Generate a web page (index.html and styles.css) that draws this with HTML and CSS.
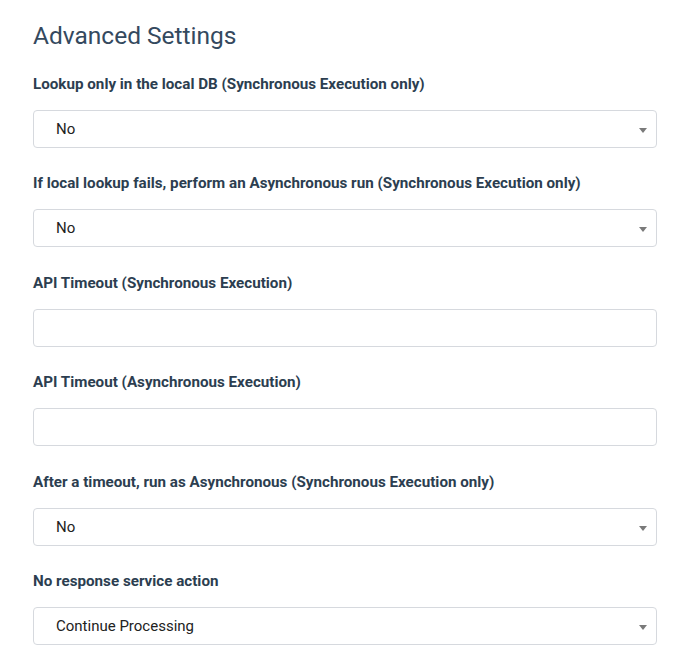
FILE: index.html
```html
<!DOCTYPE html>
<html>
<head>
<meta charset="utf-8">
<link rel="stylesheet" href="styles.css">
</head>
<body>
<div class="panel">
  <h2 class="title">Advanced Settings</h2>
  <div class="field">
    <div class="label">Lookup only in the local DB (Synchronous Execution only)</div>
    <div class="control select"><span class="value">No</span><span class="caret"></span></div>
  </div>
  <div class="field">
    <div class="label">If local lookup fails, perform an Asynchronous run (Synchronous Execution only)</div>
    <div class="control select"><span class="value">No</span><span class="caret"></span></div>
  </div>
  <div class="field">
    <div class="label">API Timeout (Synchronous Execution)</div>
    <div class="control"></div>
  </div>
  <div class="field">
    <div class="label">API Timeout (Asynchronous Execution)</div>
    <div class="control"></div>
  </div>
  <div class="field">
    <div class="label">After a timeout, run as Asynchronous (Synchronous Execution only)</div>
    <div class="control select"><span class="value">No</span><span class="caret"></span></div>
  </div>
  <div class="field">
    <div class="label">No response service action</div>
    <div class="control select"><span class="value">Continue Processing</span><span class="caret"></span></div>
  </div>
</div>
</body>
</html>
```
FILE: styles.css
```css
html, body {
  margin: 0;
  padding: 0;
  background: #ffffff;
}
body {
  font-family: Roboto, "Liberation Sans", sans-serif;
}
.panel {
  width: 624px;
  padding: 0 0 0 33px;
  display: flex;
  flex-direction: column;
}
.title {
  margin: 19.5px 0 0 0;
  font-size: 24.5px;
  line-height: 32px;
  font-weight: 400;
  color: #34495e;
}
.field {
  display: flex;
  flex-direction: column;
}
.label {
  margin-top: 22.5px;
  font-size: 15.2px;
  line-height: 20px;
  font-weight: 700;
  color: #2c3e50;
}
.field + .field .label {
  margin-top: 25.4px;
}
.control {
  margin-top: 16px;
  box-sizing: border-box;
  height: 38px;
  border: 1px solid #d6d9de;
  border-radius: 4px;
  display: flex;
  align-items: center;
  justify-content: space-between;
  padding: 0 9px 0 22px;
}
.value {
  font-size: 15px;
  color: #222;
}
.caret {
  width: 0;
  height: 0;
  border-left: 4px solid transparent;
  border-right: 4px solid transparent;
  border-top: 5px solid #7a7a7a;
  margin-top: 3px;
}
```
